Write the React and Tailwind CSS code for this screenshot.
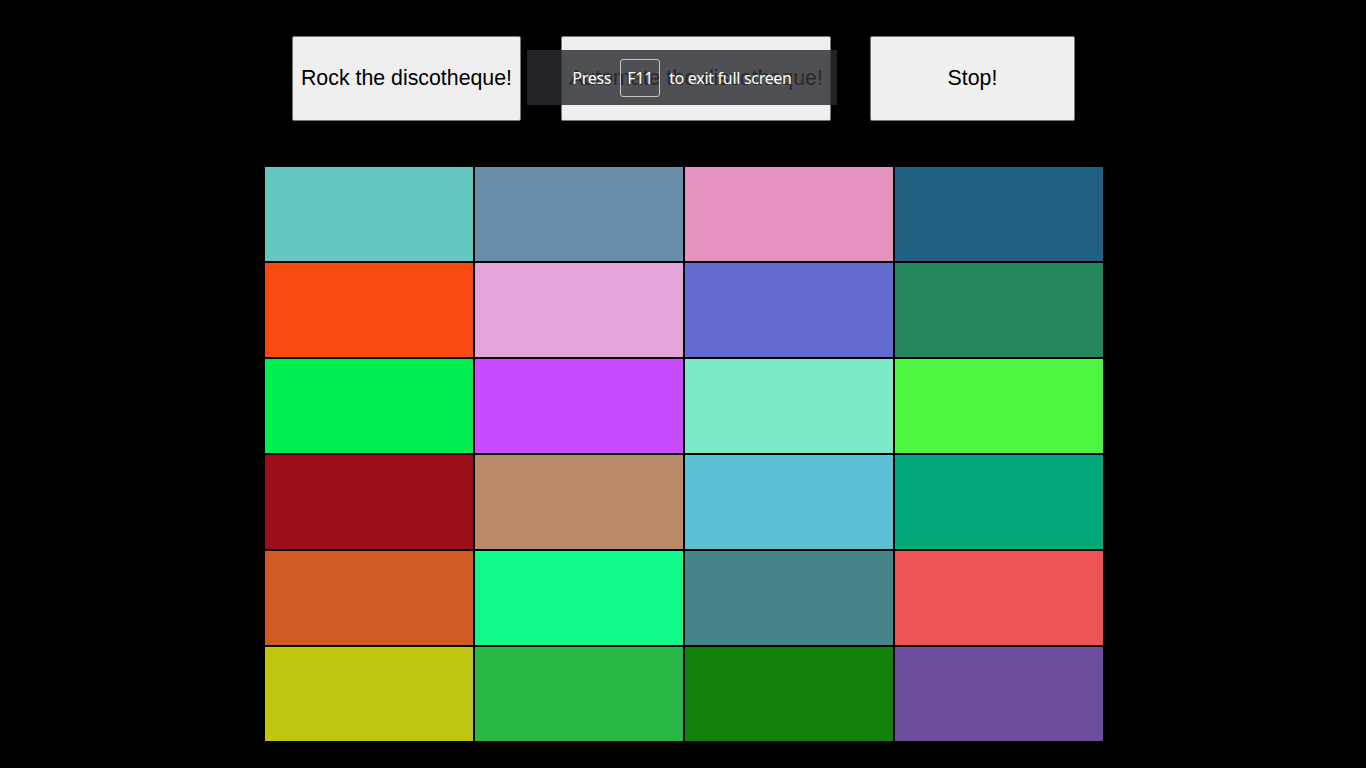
import React from "react";

const colors = [
  "#64c7c1", "#6a8ea9", "#e593be", "#216082",
  "#f94a12", "#e3a5d7", "#636bce", "#26865e",
  "#02ef52", "#c84bff", "#7be9c8", "#4bf540",
  "#9c0e18", "#b98b6a", "#5cc0d4", "#03a87b",
  "#cf5b22", "#10fb8c", "#45858a", "#ee5457",
  "#bec612", "#29b746", "#13820a", "#6d4e9c",
];

export default function App() {
  return (
    <div className="relative w-full h-[768px] bg-black overflow-hidden" style={{ fontFamily: '"Liberation Sans", Arial, sans-serif' }}>
      <div className="flex justify-start items-start pt-[36px] pl-[292px]">
        <button className="w-[229px] h-[85px] bg-[#efefef] border border-[#767676] rounded-[2px] text-[21.33px] text-black">Rock the discotheque!</button>
        <button className="ml-[40px] w-[270px] h-[85px] bg-[#efefef] border border-[#767676] rounded-[2px] text-[21.33px] text-[#222]">Automate the discotheque!</button>
        <button className="ml-[39px] w-[205px] h-[85px] bg-[#efefef] border border-[#767676] rounded-[2px] text-[21.33px] text-black">Stop!</button>
      </div>
      <div className="mt-[46px] ml-[265px] w-[838px] grid grid-cols-4 gap-[2px]">
        {colors.map((c, i) => (
          <div key={i} className="h-[94px]" style={{ backgroundColor: c }} />
        ))}
      </div>
      <div className="absolute left-[527px] top-[50px] w-[310px] h-[55px] bg-[rgba(42,43,48,0.81)] flex items-center justify-center text-white text-[16px] tracking-[-0.3px]" style={{ fontFamily: '"Noto Sans", "Open Sans", sans-serif' }}>
        <span>Press</span>
        <span className="mx-[9px] w-[40px] h-[38px] border border-[#c8c8c8] rounded-[3px] flex items-center justify-center">F11</span>
        <span>to exit full screen</span>
      </div>
    </div>
  );
}
